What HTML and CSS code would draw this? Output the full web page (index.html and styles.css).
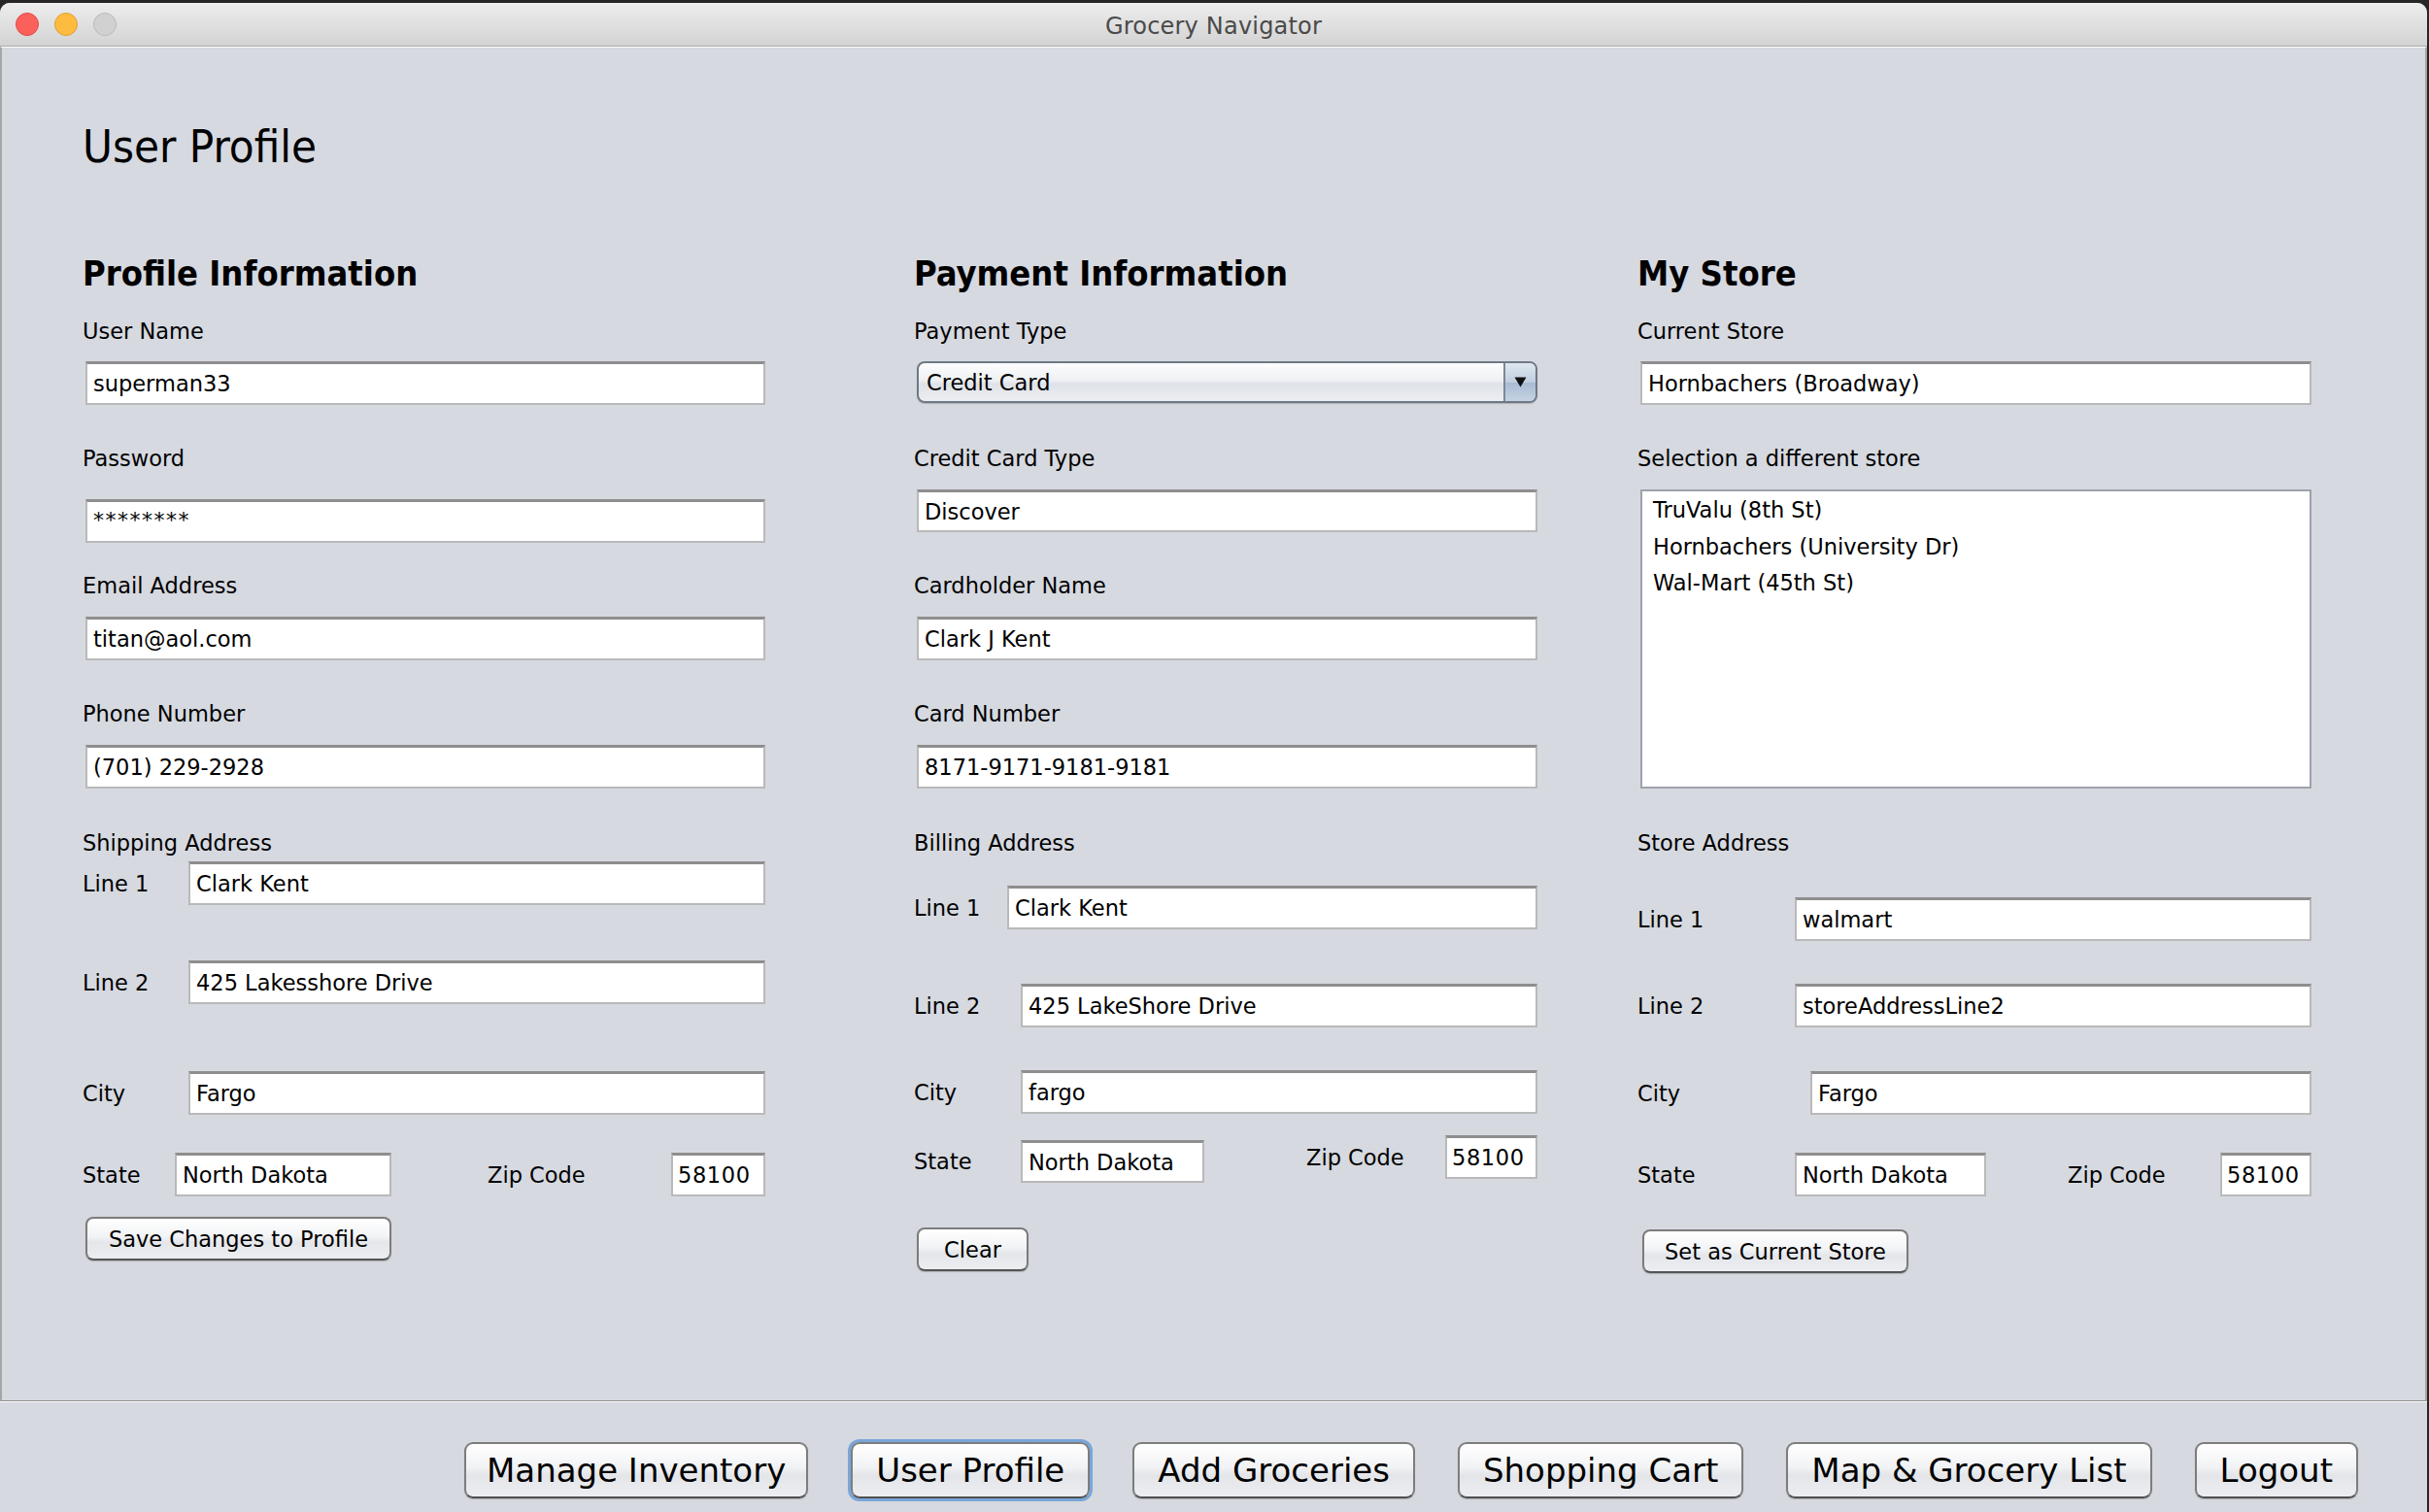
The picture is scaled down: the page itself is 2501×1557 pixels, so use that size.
FILE: index.html
```html
<!DOCTYPE html>
<html lang="en">
<head>
<meta charset="utf-8">
<title>Grocery Navigator</title>
<link rel="stylesheet" href="styles.css">
</head>
<body>
<div class="window">
  <header class="titlebar">
    <div class="lights">
      <span class="light red"></span>
      <span class="light yellow"></span>
      <span class="light gray"></span>
    </div>
    <div class="title">Grocery Navigator</div>
  </header>

  <main class="panel">
    <h1 class="page-title">User Profile</h1>
    <div class="columns">

      <section class="col col-profile">
        <h2 class="section-title">Profile Information</h2>
        <div class="lbl g26">User Name</div>
        <input class="field g18" type="text" value="superman33">
        <div class="lbl g42">Password</div>
        <input class="field pw g29" type="text" value="********">
        <div class="lbl g31">Email Address</div>
        <input class="field g19" type="text" value="titan@aol.com">
        <div class="lbl g42">Phone Number</div>
        <input class="field g19" type="text" value="(701) 229-2928">
        <div class="lbl g43">Shipping Address</div>
        <div class="row g6">
          <div class="lbl">Line 1</div>
          <input class="field" type="text" value="Clark Kent">
        </div>
        <div class="row g57">
          <div class="lbl">Line 2</div>
          <input class="field" type="text" value="425 Lakesshore Drive">
        </div>
        <div class="row g69">
          <div class="lbl">City</div>
          <input class="field" type="text" value="Fargo">
        </div>
        <div class="row row-state g39">
          <div class="pair pair-state">
            <div class="lbl">State</div>
            <input class="field" type="text" value="North Dakota">
          </div>
          <div class="pair pair-zip">
            <div class="lbl">Zip Code</div>
            <input class="field" type="text" value="58100">
          </div>
        </div>
        <button class="btn btn-save g21">Save Changes to Profile</button>
      </section>

      <section class="col col-payment">
        <h2 class="section-title">Payment Information</h2>
        <div class="lbl g26">Payment Type</div>
        <div class="combo g18">
          <span class="combo-text">Credit Card</span>
          <span class="combo-arrow"><svg width="13" height="11" viewBox="0 0 13 11"><path d="M0.5 0.5 H12.5 L6.5 10.5 Z" fill="#111"/></svg></span>
        </div>
        <div class="lbl g44">Credit Card Type</div>
        <input class="field short g19" type="text" value="Discover">
        <div class="lbl g42">Cardholder Name</div>
        <input class="field g19" type="text" value="Clark J Kent">
        <div class="lbl g42">Card Number</div>
        <input class="field g19" type="text" value="8171-9171-9181-9181">
        <div class="lbl g43">Billing Address</div>
        <div class="row row-first g31">
          <div class="lbl">Line 1</div>
          <input class="field" type="text" value="Clark Kent">
        </div>
        <div class="row g56">
          <div class="lbl">Line 2</div>
          <input class="field" type="text" value="425 LakeShore Drive">
        </div>
        <div class="row g44">
          <div class="lbl">City</div>
          <input class="field" type="text" value="fargo">
        </div>
        <div class="row row-state g22">
          <div class="pair pair-state">
            <div class="lbl">State</div>
            <input class="field" type="text" value="North Dakota">
          </div>
          <div class="pair pair-zip">
            <div class="lbl">Zip Code</div>
            <input class="field" type="text" value="58100">
          </div>
        </div>
        <button class="btn btn-clear g46">Clear</button>
      </section>

      <section class="col col-store">
        <h2 class="section-title">My Store</h2>
        <div class="lbl g26">Current Store</div>
        <input class="field g18" type="text" value="Hornbachers (Broadway)">
        <div class="lbl g42">Selection a different store</div>
        <div class="store-list g19">
          <div class="store-item">TruValu (8th St)</div>
          <div class="store-item">Hornbachers (University Dr)</div>
          <div class="store-item">Wal-Mart (45th St)</div>
        </div>
        <div class="lbl g43">Store Address</div>
        <div class="row g43">
          <div class="lbl">Line 1</div>
          <input class="field" type="text" value="walmart">
        </div>
        <div class="row g44">
          <div class="lbl">Line 2</div>
          <input class="field" type="text" value="storeAddressLine2">
        </div>
        <div class="row row-city g45">
          <div class="lbl">City</div>
          <input class="field" type="text" value="Fargo">
        </div>
        <div class="row row-state g39">
          <div class="pair pair-state">
            <div class="lbl">State</div>
            <input class="field" type="text" value="North Dakota">
          </div>
          <div class="pair pair-zip">
            <div class="lbl">Zip Code</div>
            <input class="field" type="text" value="58100">
          </div>
        </div>
        <button class="btn btn-set g34">Set as Current Store</button>
      </section>

    </div>
  </main>

  <nav class="navbar">
    <button class="nav-btn nav-inventory">Manage Inventory</button>
    <button class="nav-btn active">User Profile</button>
    <button class="nav-btn">Add Groceries</button>
    <button class="nav-btn">Shopping Cart</button>
    <button class="nav-btn">Map &amp; Grocery List</button>
    <button class="nav-btn">Logout</button>
  </nav>
</div>
</body>
</html>
```

FILE: styles.css
```css
* { box-sizing: border-box; }

html, body {
  margin: 0;
  height: 100%;
}

body {
  background: #262626;
  font-family: "DejaVu Sans", "Liberation Sans", sans-serif;
  color: #000;
  overflow: hidden;
}

.window {
  margin-top: 3px;
  width: 2499px;
  height: 1554px;
  background: #d6d9e0;
  border-radius: 10px 10px 0 0;
  overflow: hidden;
  display: flex;
  flex-direction: column;
}

/* ---------- title bar ---------- */
.titlebar {
  flex: none;
  height: 45px;
  position: relative;
  display: flex;
  align-items: center;
  justify-content: center;
  padding-top: 3px;
  background: linear-gradient(#ededed, #d3d3d3);
  border-bottom: 1px solid #a9a9a9;
}

.lights {
  position: absolute;
  left: 16px;
  top: 10px;
  display: flex;
  gap: 16px;
}

.light {
  width: 24px;
  height: 24px;
  border-radius: 50%;
  border: 1px solid transparent;
}
.light.red { background: #fc605b; border-color: #de4b44; }
.light.yellow { background: #fdbc40; border-color: #dd9e32; }
.light.gray { background: #d1d1d1; border-color: #b9b9b9; }

.title {
  font-size: 24px;
  color: #4a4a4a;
  letter-spacing: 0.2px;
}

/* ---------- main panel ---------- */
.panel {
  flex: none;
  height: 1395px;
  border-top: 1px solid #ffffff;
  border-left: 2px solid #a6a6a6;
  border-right: 2px solid #a6a6a6;
  border-bottom: 1px solid #8e8e8e;
  box-shadow: 0 1px 0 #ffffff;
  padding: 74px 0 0 83px;
}

.page-title {
  margin: 0;
  font-family: "DejaVu Sans Condensed", "DejaVu Sans", sans-serif;
  font-stretch: condensed;
  font-weight: normal;
  font-size: 47px;
  line-height: 56px;
}

.columns {
  margin-top: 83px;
  display: grid;
  grid-template-columns: 856px 745px 694px;
  align-items: start;
}

.col {
  display: flex;
  flex-direction: column;
  align-items: stretch;
}
.col-profile { width: 703px; }
.col-payment { width: 642px; }
.col-store { width: 694px; }

.section-title {
  margin: 0;
  font-family: "DejaVu Sans Condensed", "DejaVu Sans", sans-serif;
  font-stretch: condensed;
  font-weight: bold;
  font-size: 36px;
  line-height: 40px;
}

.lbl {
  font-size: 22.5px;
  line-height: 26px;
  height: 26px;
  white-space: nowrap;
}

.field {
  display: block;
  height: 45px;
  margin: 0 0 0 3px;
  width: calc(100% - 3px);
  padding: 0 6px;
  background: #ffffff;
  border: 2px solid #b9b9b9;
  border-top: 3px solid #8e8e8e;
  border-radius: 0;
  font-family: "DejaVu Sans", sans-serif;
  font-size: 22.5px;
  color: #000;
  outline: none;
}
.field.short { height: 44px; }
.field.pw {
  font-size: 22px;
  letter-spacing: 1.5px;
  padding-top: 0;
  padding-bottom: 3px;
}

/* rows with side labels */
.row {
  display: flex;
  align-items: center;
}
.row > .lbl { flex: none; width: var(--lw); }
.row > .field {
  flex: 1;
  width: auto;
  min-width: 0;
  margin-left: 0;
}

.col-profile { --lw: 109px; }
.col-payment { --lw: 110px; }
.col-payment .row-first { --lw: 96px; }
.col-store { --lw: 162px; }
.col-store .row-city { --lw: 178px; }

.row-state { align-items: flex-start; }
.pair {
  display: flex;
  align-items: center;
}
.pair .field { margin-left: 0; flex: none; }
.pair-zip { margin-left: auto; }

.col-profile .pair-state .lbl { width: 95px; }
.col-profile .pair-state .field { width: 223px; }
.col-profile .pair-zip .lbl { width: 189px; }
.col-profile .pair-zip .field { width: 97px; }

.col-payment .pair-state { margin-top: 5px; }
.col-payment .pair-state .lbl { width: 110px; }
.col-payment .pair-state .field { width: 189px; height: 44px; }
.col-payment .pair-zip .lbl { width: 143px; }
.col-payment .pair-zip .field { width: 95px; }

.col-store .pair-state .lbl { width: 162px; }
.col-store .pair-state .field { width: 197px; }
.col-store .pair-zip .lbl { width: 157px; }
.col-store .pair-zip .field { width: 94px; }

.pair-zip .field { padding-left: 5px; padding-right: 2px; letter-spacing: 0.6px; }

/* combo box */
.combo {
  margin-left: 3px;
  height: 43px;
  display: flex;
  border: 2px solid #6e7886;
  border-radius: 8px;
  overflow: hidden;
  background: linear-gradient(#fdfdfd, #eef0f3 45%, #dfe2e8 55%, #eceef2);
  box-shadow: 0 1px 1px rgba(0,0,0,0.18);
}
.combo-text {
  flex: 1;
  padding-left: 8px;
  font-size: 22.5px;
  line-height: 40px;
}
.combo-arrow {
  flex: none;
  width: 33px;
  display: flex;
  align-items: center;
  justify-content: center;
  border-left: 2px solid #7d8797;
  background: linear-gradient(#dfe7f0, #c0cfe0 50%, #a9bcd2 52%, #c4d3e4);
}

/* store list */
.store-list {
  margin-left: 3px;
  height: 308px;
  background: #ffffff;
  border: 2px solid #9da2ac;
  padding: 1px 11px 0;
}
.store-item {
  font-size: 22.5px;
  line-height: 37.5px;
}

/* buttons */
.btn {
  align-self: flex-start;
  margin-left: 3px;
  height: 45px;
  padding: 0;
  border: 2px solid #7c7c7c;
  border-bottom-color: #555555;
  border-radius: 8px;
  background: linear-gradient(#ffffff, #f2f3f5 45%, #e4e6ea 60%, #eceef1);
  font-family: "DejaVu Sans", sans-serif;
  font-size: 22.5px;
  color: #000;
  box-shadow: 0 1px 1px rgba(0,0,0,0.2);
}
.btn-save { width: 315px; }
.btn-clear { width: 115px; }
.btn-set { width: 274px; margin-left: 5px; }

/* vertical gaps */
.g6 { margin-top: 6px; }
.g18 { margin-top: 18px; }
.g19 { margin-top: 19px; }
.g21 { margin-top: 21px; }
.g22 { margin-top: 22px; }
.g26 { margin-top: 26px; }
.g29 { margin-top: 29px; }
.g31 { margin-top: 31px; }
.g34 { margin-top: 34px; }
.g39 { margin-top: 39px; }
.g42 { margin-top: 42px; }
.g43 { margin-top: 43px; }
.g44 { margin-top: 44px; }
.g45 { margin-top: 45px; }
.g46 { margin-top: 46px; }
.g56 { margin-top: 56px; }
.g57 { margin-top: 57px; }
.g69 { margin-top: 69px; }

/* ---------- bottom nav ---------- */
.navbar {
  flex: 1;
  display: flex;
  justify-content: flex-end;
  align-items: flex-start;
  gap: 44px;
  padding: 42px 71px 0 0;
}

.nav-btn {
  height: 58px;
  padding: 0 24px;
  border: 2px solid #7d7d7d;
  border-bottom-color: #505050;
  border-radius: 9px;
  background: linear-gradient(#ffffff, #f1f2f4 45%, #e3e5e9 60%, #eceef1);
  font-family: "DejaVu Sans", sans-serif;
  font-size: 34px;
  color: #000;
  box-shadow: 0 1px 1px rgba(0,0,0,0.2);
}
.nav-btn.nav-inventory { padding: 0 21px; }
.nav-btn.active {
  box-shadow: 0 0 0 3px #78a6d9;
}
```
